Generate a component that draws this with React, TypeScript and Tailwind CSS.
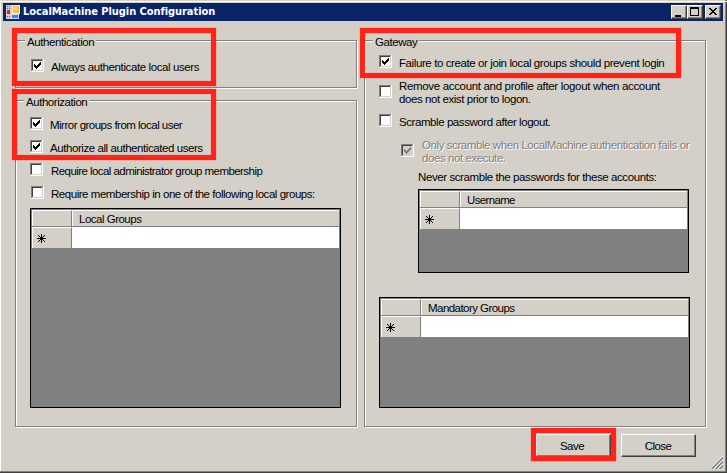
import type { ReactNode } from "react";

const label = "block whitespace-nowrap text-[11.5px] leading-[13px]";

function GroupBox({ title, titleClass, className, children }: { title: string; titleClass: string; className: string; children: ReactNode }) {
  return (
    <section className={`flex flex-col items-start border border-[#808080] shadow-[1px_1px_0_#fff,inset_1px_1px_0_#fff] ${className}`}>
      <h2 className={`${label} -mt-[5px] bg-[#d4d0c8] font-normal ${titleClass}`}>{title}</h2>
      {children}
    </section>
  );
}

function CheckBox({ checked = false, disabled = false }: { checked?: boolean; disabled?: boolean }) {
  return (
    <svg width="13" height="13" viewBox="0 0 13 13" shapeRendering="crispEdges" className="shrink-0">
      <path d="M0 0h13v13H0z" fill="#fff" />
      <path d="M0 0h12v1H1v11H0z" fill="#808080" />
      <path d="M1 1h10v1H2v9H1z" fill="#404040" />
      <path d="M11 1h1v11H1v-1h10z" fill="#d4d0c8" />
      {disabled && <path d="M2 2h9v9H2z" fill="#d4d0c8" />}
      {checked && (
        <path
          d="M3 5h1v3H3zM4 6h1v3H4zM5 7h1v3H5zM6 6h1v3H6zM7 5h1v3H7zM8 4h1v3H8zM9 3h1v3H9z"
          fill={disabled ? "#808080" : "#000"}
        />
      )}
    </svg>
  );
}

function Option({ className, textClass, checked, disabled, children }: { className: string; textClass: string; checked?: boolean; disabled?: boolean; children: ReactNode }) {
  return (
    <div className={`flex items-start ${className}`}>
      <CheckBox checked={checked} disabled={disabled} />
      <div className={`${label} ${disabled ? "text-[#808080] [text-shadow:1px_1px_0_#fff]" : ""} ${textClass}`}>{children}</div>
    </div>
  );
}

function DataGrid({ title, titleClass, className }: { title: string; titleClass: string; className: string }) {
  return (
    <div className={`flex flex-col border border-black bg-[#808080] pt-px pl-px ${className}`}>
      <div className="mr-px flex h-[17px] shrink-0 border-b border-[#808080] bg-[#d4d0c8]">
        <div className="w-10 border-t border-r border-l border-t-white border-r-[#808080] border-l-white" />
        <div className="flex-1 border-t border-l border-white pt-[2px] pl-[6px]">
          <span className={`${label} ${titleClass}`}>{title}</span>
        </div>
      </div>
      <div className="mr-px flex h-[21px] shrink-0 bg-white">
        <div className="flex w-10 items-center border-t border-r border-l border-t-white border-r-[#808080] border-l-white bg-[#d4d0c8] pl-1">
          <svg width="9" height="9" viewBox="0 0 9 9" shapeRendering="crispEdges">
            <path d="M4 0h1v9H4zM0 4h9v1H0zM1 1h1v1H1zM2 2h1v1H2zM3 3h3v3H3zM6 6h1v1H6zM7 7h1v1H7zM7 1h1v1H7zM6 2h1v1H6zM2 6h1v1H2zM1 7h1v1H1z" />
          </svg>
        </div>
      </div>
    </div>
  );
}

function CaptionButton({ className = "", children }: { className?: string; children: ReactNode }) {
  return (
    <button className={`h-[14px] w-4 border border-t-white border-r-[#404040] border-b-[#404040] border-l-white bg-[#d4d0c8] shadow-[inset_-1px_-1px_0_#808080] ${className}`}>
      <svg width="14" height="12" viewBox="0 0 14 12" shapeRendering="crispEdges" className="block">{children}</svg>
    </button>
  );
}

function PushButton({ className = "", children }: { className?: string; children: ReactNode }) {
  return (
    <button className={`h-[23px] w-[75px] border border-t-white border-r-[#404040] border-b-[#404040] border-l-white bg-[#d4d0c8] pt-[2px] shadow-[inset_-1px_-1px_0_#808080] ${label} ${className}`}>
      {children}
    </button>
  );
}

function Highlight({ className }: { className: string }) {
  return <div className={`pointer-events-none absolute border-[5px] border-[#ff2318] shadow-[0_0_1px_#ff2318,inset_0_0_1px_#ff2318] ${className}`} />;
}

export default function App() {
  return (
    <div className="relative flex h-[473px] w-[727px] flex-col overflow-hidden bg-[#d4d0c8] font-['Liberation_Sans',Arial,sans-serif] text-black shadow-[inset_-1px_-1px_0_#404040,inset_-2px_-2px_0_#808080,inset_1px_0_0_#fff]">
      <div className="ml-px mt-px h-px shrink-0 bg-white" />
      <header className="mt-px mr-1 ml-[3px] flex h-[18px] shrink-0 items-center bg-[#0a246a] pr-[2px] pl-[3px]">
        <svg width="14" height="14" viewBox="0 0 14 14" shapeRendering="crispEdges">
          <path d="M0 0h14v9h-2v5H0z" fill="#d4d0c8" />
          <path d="M1 1h1v1H1zM3 1h1v1H3zM1 3h1v1H1zM3 3h1v1H3zM1 11h1v1H1zM3 11h1v1H3z" fill="#606468" />
          <path d="M6 0h8v9H6z" fill="#fff0c8" />
          <path d="M7 1h6v7H7z" fill="#f8bc48" />
          <path d="M8 2h3v3H8z" fill="#ffd880" />
          <path d="M0 4h5v6H0z" fill="#f4c8c0" />
          <path d="M1 5h3v4H1z" fill="#c83020" />
          <path d="M5 9h8v5H5z" fill="#c8e0ff" />
          <path d="M6 10h6v3H6z" fill="#3c84e8" />
        </svg>
        <h1 className="ml-[3px] whitespace-nowrap font-['DejaVu_Sans_Condensed','DejaVu_Sans',sans-serif] text-[11px] leading-[14px] font-bold tracking-[-0.06px] text-white">LocalMachine Plugin Configuration</h1>
        <div className="ml-auto flex">
          <CaptionButton><path d="M3 9h6v2H3z" /></CaptionButton>
          <CaptionButton><path d="M2 1h9v9H2zM3 3v6h7V3z" fillRule="evenodd" /></CaptionButton>
          <CaptionButton className="ml-[2px]">
            <path d="M3 2h2v1H3zM4 3h2v1H4zM5 4h4v1H5zM6 5h2v1H6zM5 6h4v1H5zM4 7h2v1H4zM3 8h2v1H3zM9 2h2v1H9zM8 3h2v1H8zM8 7h2v1H8zM9 8h2v1H9z" />
          </CaptionButton>
        </div>
      </header>

      <main className="mt-[19px] flex h-[387px] shrink-0 gap-[7px] pl-[15px]">
        <div className="flex w-[342px] flex-col gap-3">
          <GroupBox title="Authentication" className="h-12" titleClass="ml-[9px] px-[2px] tracking-[-0.4px]">
            <Option checked className="mt-[10px] ml-[15px]" textClass="ml-[7px] mt-[2px] tracking-[-0.4px]">Always authenticate local users</Option>
          </GroupBox>
          <GroupBox title="Authorization" className="h-[327px]" titleClass="ml-[8px] px-[2px] tracking-[-0.45px]">
            <Option checked className="mt-[8px] ml-[14px] h-[23px]" textClass="ml-[7px] mt-[2px] tracking-[-0.51px]">Mirror groups from local user</Option>
            <Option checked className="ml-[14px] h-[23px]" textClass="ml-[7px] mt-[2px] tracking-[-0.43px]">Authorize all authenticated users</Option>
            <Option className="ml-[14px] h-[23px]" textClass="ml-[8px] mt-[2px] tracking-[-0.56px]">Require local administrator group membership</Option>
            <Option className="ml-[15px] h-[22px]" textClass="ml-[7px] mt-[2px] tracking-[-0.46px]">Require membership in one of the following local groups:</Option>
            <DataGrid title="Local Groups" titleClass="tracking-[-0.5px]" className="ml-[14px] h-[200px] w-[311px]" />
          </GroupBox>
        </div>
        <GroupBox title="Gateway" className="w-[342px]" titleClass="ml-[8px] px-[2px] tracking-[-0.45px]">
          <Option checked className="mt-[6px] ml-[14px] h-[30px]" textClass="ml-[7px] mt-[2px] tracking-[-0.4px]">Failure to create or join local groups should prevent login</Option>
          <Option className="ml-[14px] h-[29px]" textClass="ml-[7px] -mt-[5px] tracking-[-0.33px]">
            Remove account and profile after logout when account<br />
            <span className="tracking-[-0.43px]">does not exist prior to logon.</span>
          </Option>
          <Option className="ml-[14px] h-[30px]" textClass="ml-[7px] mt-[2px] tracking-[-0.43px]">Scramble password after logout.</Option>
          <Option checked disabled className="ml-[36px] h-[27px]" textClass="ml-[8px] -mt-[5px] tracking-[-0.42px]">
            Only scramble when LocalMachine authentication fails or<br />does not execute.
          </Option>
          <p className={`${label} ml-[53px] tracking-[-0.41px]`}>Never scramble the passwords for these accounts:</p>
          <DataGrid title="Username" titleClass="tracking-[-0.65px]" className="mt-[5px] ml-[53px] h-[84px] w-[271px]" />
          <DataGrid title="Mandatory Groups" titleClass="tracking-[-0.55px]" className="mt-[24px] ml-[14px] h-[111px] w-[311px]" />
        </GroupBox>
      </main>

      <footer className="mt-[7px] mr-[31px] flex shrink-0 justify-end gap-[10px]">
        <PushButton className="pr-[3px] tracking-[-0.5px]">Save</PushButton>
        <PushButton className="pr-px tracking-[-0.6px]">Close</PushButton>
      </footer>

      <svg width="13" height="13" viewBox="0 0 13 13" className="absolute right-1 bottom-1">
        <path d="M0 13L13 0M4 13L13 4M8 13L13 8" stroke="#fff" />
        <path d="M1.5 13L13 1.5M5.5 13L13 5.5M9.5 13L13 9.5" stroke="#808080" strokeWidth="1.5" />
      </svg>

      <Highlight className="top-[28px] left-3 h-[58px] w-[204px]" />
      <Highlight className="top-[89px] left-3 h-[71px] w-[204px]" />
      <Highlight className="top-[28px] left-[360px] h-[50px] w-[321px]" />
      <Highlight className="top-[428px] left-[531px] h-[33px] w-[85px]" />
    </div>
  );
}
